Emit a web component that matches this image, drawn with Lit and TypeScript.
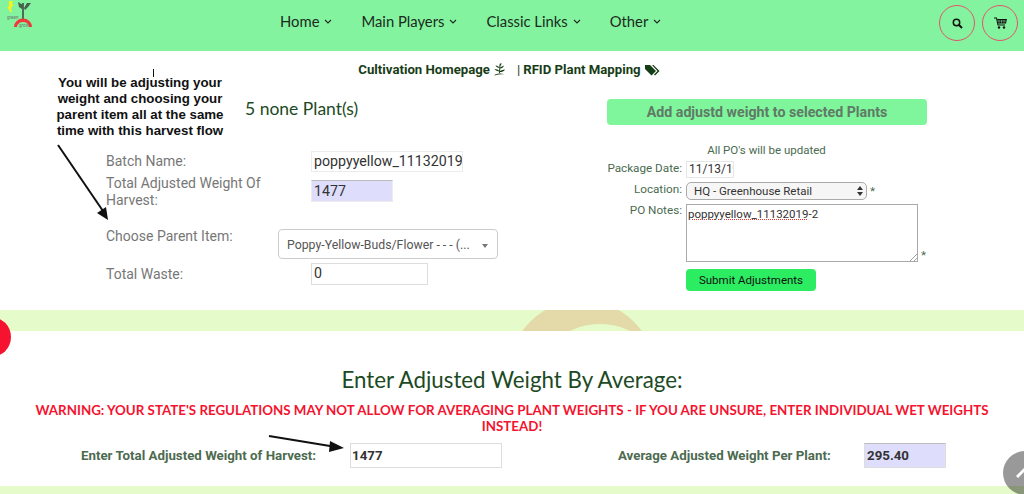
import { LitElement, html, css, svg } from "lit";
import { customElement } from "lit/decorators.js";

@customElement("app-root")
export class AppRoot extends LitElement {
  static styles = css`
    :host { display: block; position: relative; width: 1024px; height: 494px; overflow: hidden; background: #fff; font-family: Roboto, "Liberation Sans", sans-serif; }
    * { box-sizing: border-box; }
    .nav { height: 51px; background: #83f39f; display: flex; align-items: flex-start; position: relative; }
    .logo { width: 36px; height: 32px; flex: none; }
    .menu { display: flex; gap: 29px; margin-left: 244px; padding-top: 11px; font: 14.8px/20px Lato, sans-serif; color: #1c2a20; }
    .menu span { display: flex; align-items: center; gap: 5px; white-space: nowrap; }
    .tools { display: flex; gap: 7px; margin-left: auto; margin-right: 6px; padding-top: 5px; }
    .tool { width: 36px; height: 36px; border-radius: 50%; border: 1.3px solid #e8526a; display: flex; align-items: center; justify-content: center; }
    .links { display: flex; justify-content: center; align-items: center; height: 36px; font-size: 13.2px; font-weight: 700; color: #173d17; padding-top: 1px; padding-right: 6px; }
    .links svg { margin-left: 4px; }
    .sep { margin-left: 12px; margin-right: 3px; font-weight: 400; }
    .cols { display: flex; height: 223px; }
    .left { width: 607px; flex: none; padding-left: 106px; position: relative; }
    .title { font: 17.5px/20px Lato, sans-serif; color: #1c4a24; margin: 12px 0 0 139px; height: 20px; }
    .form { display: grid; grid-template-columns: 205px auto; margin-top: 32px; color: #777; font-size: 14px; line-height: 16px; justify-content: start; }
    .label { padding-top: 2px; }
    .box { border: 1px solid #ececec; background: #fff; color: #333; font-size: 14.2px; height: 21px; line-height: 19px; padding: 0 2px; }
    .r1 { width: 152px; white-space: nowrap; overflow: hidden; }
    .r2 { width: 82px; background: #dedefc; border-top-color: #bbb; margin-top: 8px; height: 22px; line-height: 21px; padding-left: 2px; }
    .lab2 { padding-top: 3px; height: 48px; width: 180px; line-height: 17px; }
    .parent { width: 220px; height: 30px; margin: 9px 0 0 -33px; border: 1px solid #ccc; border-radius: 4px; display: flex; align-items: center; justify-content: space-between; padding: 3px 9px 0 8px; font-size: 12.3px; color: #555; }
    .parent i { width: 0; height: 0; border: 3px solid transparent; border-top: 4px solid #777; border-bottom: 0; }
    .lab3 { padding-top: 8px; }
    .lab4 { margin-top: 4px; padding-top: 3px; }
    .r4 { width: 117px; height: 22px; border-color: #ddd; margin-top: 4px; }
    .right { width: 320px; flex: none; }
    .add { height: 26px; margin-top: 12px; background: #7ff59c; border-radius: 4px; font-weight: 700; font-size: 14.2px; color: #5f7a66; display: flex; align-items: center; justify-content: center; }
    .note { text-align: center; color: #4a6b4f; font-size: 11.5px; line-height: 14px; margin-top: 18px; padding-right: 1px; }
    .pform { display: grid; grid-template-columns: 75px auto; column-gap: 4px; margin-top: 4px; font-size: 11.7px; color: #4a6b4f; justify-content: start; }
    .pform .k { text-align: right; line-height: 14px; white-space: nowrap; }
    .date { width: 48px; height: 17px; border: 1px solid #e6e6e6; font-size: 12px; line-height: 15px; color: #333; padding: 0 2px; overflow: hidden; white-space: nowrap; }
    .loc { display: flex; align-items: center; gap: 3px; margin-top: 4px; }
    .sel { width: 181px; height: 18px; border: 1px solid #aaa; border-radius: 5px; background: #f6f6f6; color: #333; font-size: 11.5px; line-height: 16px; padding-left: 7px; display: flex; justify-content: space-between; align-items: center; padding-right: 3px; }
    .sel svg { display: block; }
    .k2 { margin-top: 4px; }
    .k3 { margin-top: 3px; }
    .ta-wrap { display: flex; align-items: flex-end; gap: 3px; margin-top: 4px; }
    .ta { width: 232px; height: 58px; border: 1px solid #aaa; color: #333; font-size: 11.5px; line-height: 15px; padding: 2px 1px; position: relative; }
    .ta u { text-decoration: underline dotted #e33; text-underline-offset: 1px; }
    .grip { position: absolute; right: 0; bottom: 0; }
    .submit { grid-column: 2; width: 130px; height: 22px; margin-top: 7px; background: #2cec62; border-radius: 4px; font-size: 11.5px; color: #111; display: flex; align-items: center; justify-content: center; }
    .band { height: 21px; background: #e5fbc9; overflow: hidden; }
    .band svg { display: block; }
    .avg { height: 155px; text-align: center; position: relative; }
    h2 { margin: 0; padding-top: 36px; font: 400 22.3px/26px Lato, sans-serif; color: #1c4a24; }
    .warn { font: 700 13.35px/16px Lato, sans-serif; color: #f5132f; margin-top: 9px; padding: 0 30px; }
    .arow { display: flex; align-items: center; margin-top: 9px; font-weight: 700; font-size: 13.3px; color: #4d6b50; text-align: left; }
    .a1 { margin-left: 81px; width: 269px; }
    .in { width: 152px; height: 25px; border: 1px solid #ddd; font-size: 13.3px; line-height: 23px; color: #333; padding: 0 1px; }
    .a2 { margin-left: 116px; width: 246px; }
    .in2 { width: 82px; background: #dedefc; border-top-color: #bbb; padding-left: 2px; }
    .foot { height: 8px; background: #e5fbc9; }
    .ann { position: absolute; left: 52px; top: 75px; width: 176px; text-align: center; font: 700 13.3px/16px "Liberation Sans", Arial, sans-serif; color: #111; }
    .art { position: absolute; left: 0; top: 0; pointer-events: none; }
    .dot { position: absolute; left: -29px; top: 317px; width: 40px; height: 40px; border-radius: 50%; background: #f5132f; }
    .fab { position: absolute; left: 1003px; top: 451px; width: 44px; height: 44px; border-radius: 50%; background: rgba(0, 0, 0, 0.4); overflow: hidden; }
    .fab svg { display: block; }
  `;

  render() {
    const chev = html`<svg width="8" height="5" viewBox="0 0 8 5"><path d="M1 1l3 3 3-3" fill="none" stroke="#1c2a20" stroke-width="1.1"/></svg>`;
    return html`
      <div class="nav">
        <svg class="logo" viewBox="0 0 36 32">
          <path d="M9 1h4l-1 3 2 1-2 1-1 3 1 3-2 0-1-3-2-1 2-2z" fill="#f4f41c"/>
          <path d="M23 21V3" stroke="#47604c" stroke-width="1.8" fill="none"/>
          <path d="M18 2l5 3-1 4-3-2zM24 8l3-5 4 0-3 4-3 3z" fill="#47604c"/>
          <path d="M14 27a9 8.500 0 0 1 18 0h-3a6 5 0 0 0-12 0z" fill="#f03a3a"/>
          <text x="7" y="19" font-size="4.600" font-family="Roboto" fill="#6d7a70">green</text>
          <text x="19" y="27" font-size="4.600" font-family="Roboto" fill="#6d7a70">grow</text>
        </svg>
        <div class="menu">
          <span>Home ${chev}</span><span>Main Players ${chev}</span><span>Classic Links ${chev}</span><span>Other ${chev}</span>
        </div>
        <div class="tools">
          <div class="tool"><svg width="11" height="11" viewBox="0 0 11 11"><circle cx="4.500" cy="4.500" r="3.200" fill="none" stroke="#111" stroke-width="1.500"/><path d="M7 7l3 3" stroke="#111" stroke-width="2"/></svg></div>
          <div class="tool"><svg width="13" height="12" viewBox="0 0 13 12"><path d="M0 1h2.500l1.500 7h7" fill="none" stroke="#111" stroke-width="1.100"/><path d="M3 2h10l-1 4.500H4z" fill="#111"/><path d="M5 3v3M7.500 3v3M10 3v3M3.500 4h9" stroke="#83f39f" stroke-width=".5"/><circle cx="5" cy="10.500" r="1.200" fill="#111"/><circle cx="10" cy="10.500" r="1.200" fill="#111"/></svg></div>
        </div>
      </div>
      <div class="links">
        <span>Cultivation Homepage</span>
        <svg width="11" height="13" viewBox="0 0 11 13"><path d="M5.500 10L6 1.500" stroke="#173d17" stroke-width="1" fill="none"/><path d="M5.500 1l2-1-.5 3zM5.500 5C4 5 2 4 1.500 2.500 3.500 2.500 5 3.500 5.500 5zM6 4.500C7 4 9 3 10 2.500 9.500 4.500 8 5.500 6 5.500zM5.500 8.500C3.500 8.500 1.500 7.500.5 6 3 6 5 7 5.500 8.500zM6 8c1.500-.5 3-1.500 5-1.500-1 2-3 2.500-5 2.500zM.5 12C3 10.500 7 10 10.500 11.500 7 11 4 11.500.5 12.500z" fill="#173d17"/></svg>
        <span class="sep">|</span><span>RFID Plant Mapping</span>
        <svg width="15" height="12" viewBox="0 0 15 12"><path d="M0 1h5l6 6-4.500 4.500L0 5z" fill="#173d17"/><path d="M7 1h1.500l6 6-4.500 4.500-1-1 3.500-3.500z" fill="#173d17"/></svg>
      </div>
      <div class="cols">
        <div class="left">
          <div class="title">5 none Plant(s)</div>
          <div class="form">
            <div class="label">Batch Name:</div><div class="box r1">poppyyellow_11132019</div>
            <div class="label lab2">Total Adjusted Weight Of Harvest:</div><div class="box r2">1477</div>
            <div class="label lab3">Choose Parent Item:</div>
            <div class="box parent"><span>Poppy-Yellow-Buds/Flower - - - (...</span><i></i></div>
            <div class="label lab4">Total Waste:</div><div class="box r4">0</div>
          </div>
        </div>
        <div class="right">
          <div class="add">Add adjustd weight to selected Plants</div>
          <div class="note">All PO's will be updated</div>
          <div class="pform">
            <div class="k">Package Date:</div><div class="date">11/13/19</div>
            <div class="k k2">Location:</div>
            <div class="loc"><div class="sel"><span>HQ - Greenhouse Retail</span><svg width="6" height="10" viewBox="0 0 6 10"><path d="M3 0l3 4H0zM3 10l3-4H0z" fill="#333"/></svg></div><span>*</span></div>
            <div class="k k3">PO Notes:</div>
            <div class="ta-wrap"><div class="ta"><u>poppyyellow_11132019</u>-2
              <svg class="grip" width="8" height="8" viewBox="0 0 8 8"><path d="M1 8l7-7M5 8l3-3" stroke="#888" stroke-width=".8"/></svg></div><span>*</span></div>
            <div class="submit">Submit Adjustments</div>
          </div>
        </div>
      </div>
      <div class="band">
        <svg width="1024" height="21" viewBox="0 310 1024 21">
          <circle cx="582" cy="374" r="73.600" fill="#e4d9a8"/>
          <circle cx="600" cy="392" r="68" fill="#e5fbc9"/>
        </svg>
      </div>
      <div class="avg">
        <h2>Enter Adjusted Weight By Average:</h2>
        <div class="warn">WARNING: YOUR STATE'S REGULATIONS MAY NOT ALLOW FOR AVERAGING PLANT WEIGHTS - IF YOU ARE UNSURE, ENTER INDIVIDUAL WET WEIGHTS INSTEAD!</div>
        <div class="arow">
          <div class="a1">Enter Total Adjusted Weight of Harvest:</div><div class="in">1477</div>
          <div class="a2">Average Adjusted Weight Per Plant:</div><div class="in in2">295.40</div>
        </div>
      </div>
      <div class="foot"></div>
      <div class="ann">You will be adjusting your weight and choosing your parent item all at the same time with this harvest flow</div>
      <div class="dot"></div>
      <div class="fab"><svg width="44" height="44" viewBox="0 0 44 44"><path d="M14 26l10-10" stroke="#fff" stroke-width="3"/></svg></div>
      <svg class="art" width="1024" height="494" viewBox="0 0 1024 494">
        ${svg`<path d="M153.500 69v8" stroke="#111" stroke-width="1"/>
        <path d="M58 145L103 211" stroke="#111" stroke-width="2"/>
        <path d="M108 220l-11-7 9-6z" fill="#111"/>
        <path d="M269 436L330 446" stroke="#111" stroke-width="2"/>
        <path d="M344 448l-14-7-1 11z" fill="#111"/>`}
      </svg>
    `;
  }
}
